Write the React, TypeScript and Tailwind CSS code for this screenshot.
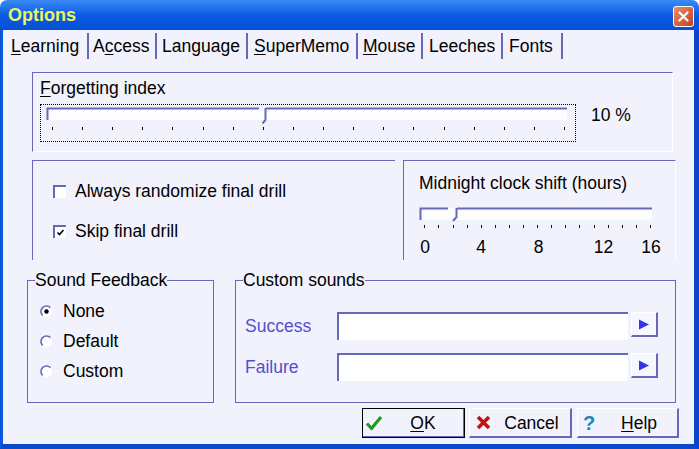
import React from 'react'

const tabs = [
  { label: 'Learning', u: 0, cls: 'w-[84px] pl-[8px]' },
  { label: 'Access', u: 1, cls: 'w-[66px] pl-[4px]' },
  { label: 'Language', u: -1, cls: 'w-[89px] pl-[5px]' },
  { label: 'SuperMemo', u: 0, cls: 'w-[108px] pl-[6px]' },
  { label: 'Mouse', u: 0, cls: 'w-[63px] pl-[5px]' },
  { label: 'Leeches', u: -1, cls: 'w-[78px] pl-[6px]' },
  { label: 'Fonts', u: -1, cls: 'w-[58px] pl-[6px]' },
]

const Mnemonic = ({ text, u }: { text: string; u: number }) =>
  u < 0 ? (
    <>{text}</>
  ) : (
    <>
      {text.slice(0, u)}
      <span className="underline underline-offset-2">{text[u]}</span>
      {text.slice(u + 1)}
    </>
  )

const CheckBox = ({ checked }: { checked?: boolean }) => (
  <span className="flex h-[13px] w-[13px] items-center justify-center border-t-2 border-l-2 border-t-[#6868b8] border-l-[#6868b8] bg-white">
    {checked && (
      <svg width="9" height="9" viewBox="0 0 9 9">
        <path d="M1.5 4.5 L3.5 6.5 L7.5 2" stroke="#000" strokeWidth="1.6" fill="none" />
      </svg>
    )}
  </span>
)

const Radio = ({ on }: { on?: boolean }) => (
  <svg width="13" height="13" viewBox="0 0 13 13">
    <circle cx="6.5" cy="6.5" r="5.5" fill="#fff" />
    <path d="M10.4 2.6 A5.5 5.5 0 0 0 2.6 10.4" stroke="#6868b8" strokeWidth="1.6" fill="none" />
    {on && <circle cx="6.5" cy="6.5" r="2.2" fill="#000" />}
  </svg>
)

const PlayButton = () => (
  <button
    type="button"
    className="ml-[3px] flex h-[25px] w-[27px] items-center justify-center border-t border-l border-t-white border-l-white border-r-2 border-b-2 border-r-[#6868b8] border-b-[#6868b8] bg-[#f7f7ff]"
  >
    <svg width="12" height="11" viewBox="0 0 12 11">
      <path d="M1 0.5 L11 5.5 L1 10.5 Z" fill="#3434e8" />
    </svg>
  </button>
)

export default function App() {
  const bigTicks = Array.from({ length: 18 }, (_, i) => 11 + i * 30.12)
  const hourTicks = Array.from({ length: 17 }, (_, i) => 5.3 + i * 14.1)
  const hourLabels = [
    { t: '0', x: 6 },
    { t: '4', x: 62 },
    { t: '8', x: 119.5 },
    { t: '12', x: 184.5 },
    { t: '16', x: 232 },
  ]

  return (
    <div className="flex h-[449px] w-[699px] flex-col overflow-hidden rounded-t-[7px] font-['Liberation_Sans',Arial,sans-serif] text-[17.5px] leading-[20px] text-black">
      {/* title bar */}
      <div className="flex h-[30px] items-center justify-between bg-linear-to-b from-[#3b8bf6] via-[#0a5ae4] to-[#0650d6] pl-[8px] pr-[5px]">
        <span className="text-[18px] font-bold text-[#eef55a]">Options</span>
        <button
          type="button"
          className="mt-[2px] flex h-[21px] w-[21px] items-center justify-center rounded-[3px] border border-white bg-linear-to-br from-[#ec8a66] to-[#c43e1c]"
        >
          <svg width="11" height="11" viewBox="0 0 11 11">
            <path d="M1.5 1.5 L9.5 9.5 M9.5 1.5 L1.5 9.5" stroke="#fff" strokeWidth="2.2" strokeLinecap="round" />
          </svg>
        </button>
      </div>

      <div className="flex flex-1 flex-col border-l-[3px] border-r-[5px] border-b-[5px] border-l-[#0b57e0] border-r-[#0a44c8] border-b-[#0a48cc] bg-[#f2f2fc]">
        {/* tabs */}
        <div className="flex h-[32px] items-center">
          {tabs.map((t) => (
            <React.Fragment key={t.label}>
              <span className={t.cls}>
                <Mnemonic text={t.label} u={t.u} />
              </span>
              <span className="h-[26px] w-[2px] bg-[#6868b8]" />
            </React.Fragment>
          ))}
        </div>

        {/* forgetting index */}
        <div className="ml-[29px] mt-[10px] h-[80px] w-[641px] border border-t-[#6868b8] border-l-[#6868b8] border-r-white border-b-white pl-[7px] pt-[5px]">
          <div>
            <Mnemonic text="Forgetting index" u={0} />
          </div>
          <div className="mt-[6px] flex items-start">
            <div className="h-[38px] w-[536px] border border-dotted border-black">
              <svg width="534" height="36" viewBox="0 0 534 36" className="block">
                <rect x="6" y="3" width="520" height="12" fill="#fdfdff" />
                <path d="M6.5 15 V3.5 H218" stroke="#6868b8" strokeWidth="2" fill="none" />
                <path d="M224.5 3 V15 L221.5 18.5" stroke="#6868b8" strokeWidth="2" fill="none" />
                <path d="M225 3.5 H526" stroke="#6868b8" strokeWidth="2" fill="none" />
                {bigTicks.map((x) => (
                  <rect key={x} x={Math.round(x)} y="22" width="1" height="3" fill="#000" />
                ))}
              </svg>
            </div>
            <span className="ml-[15px] mt-[1px]">10 %</span>
          </div>
        </div>

        {/* drill options + midnight shift */}
        <div className="ml-[29px] mt-[8px] flex h-[100px]">
          <div className="flex w-[363px] flex-col gap-[20px] border-t border-l border-[#6868b8] pl-[20px] pt-[20px]">
            <div className="flex h-[20px] items-center">
              <CheckBox />
              <span className="ml-[9px]">Always randomize final drill</span>
            </div>
            <div className="flex h-[20px] items-center">
              <CheckBox checked />
              <span className="ml-[9px]">Skip final drill</span>
            </div>
          </div>
          <div className="ml-[8px] w-[273px] border-t border-l border-r border-t-[#6868b8] border-l-[#6868b8] border-r-white pl-[15px] pt-[12px]">
            <div>Midnight clock shift (hours)</div>
            <svg width="250" height="58" viewBox="0 0 250 58" className="mt-[7px] block">
              <rect x="1" y="8" width="232" height="12" fill="#fdfdff" />
              <path d="M1.5 20 V8.5 H29" stroke="#6868b8" strokeWidth="2" fill="none" />
              <path d="M37.5 8 V17 L34 21" stroke="#6868b8" strokeWidth="2" fill="none" />
              <path d="M38 8.5 H233" stroke="#6868b8" strokeWidth="2" fill="none" />
              {hourTicks.map((x) => (
                <rect key={x} x={Math.round(x)} y="25" width="1" height="3" fill="#000" />
              ))}
              {hourLabels.map((l) => (
                <text
                  key={l.t}
                  x={l.x}
                  y="53"
                  textAnchor="middle"
                  fontSize="17.5"
                  fontFamily="'Liberation Sans', Arial, sans-serif"
                  fill="#000"
                >
                  {l.t}
                </text>
              ))}
            </svg>
          </div>
        </div>

        {/* sounds */}
        <div className="ml-[24px] mt-[10px] flex items-start">
          <fieldset className="h-[133px] w-[187px] border border-[#6868b8]">
            <legend className="ml-[7px]">Sound Feedback</legend>
            <div className="flex flex-col pl-[12px] pt-[6px]">
              {['None', 'Default', 'Custom'].map((s, i) => (
                <div key={s} className="flex h-[30px] items-center">
                  <Radio on={i === 0} />
                  <span className="ml-[10px]">{s}</span>
                </div>
              ))}
            </div>
          </fieldset>
          <fieldset className="ml-[21px] h-[133px] w-[441px] border border-[#6868b8]">
            <legend className="ml-[7px]">Custom sounds</legend>
            <div className="flex flex-col gap-[13px] pl-[9px] pt-[22px]">
              {['Success', 'Failure'].map((s) => (
                <div key={s} className="flex h-[28px] items-start">
                  <span className="w-[92px] leading-[28px] text-[#5050d0]">{s}</span>
                  <div className="h-[28px] w-[291px] border-t-2 border-l-2 border-t-[#6868b8] border-l-[#6868b8] bg-white" />
                  <PlayButton />
                </div>
              ))}
            </div>
          </fieldset>
        </div>

        {/* buttons */}
        <div className="mt-[5px] flex justify-end gap-[4px] pr-[15px]">
          <button type="button" className="h-[30px] w-[103px] border border-black">
            <span className="flex h-full w-full items-center border-r border-b border-r-[#6868b8] border-b-[#6868b8] pl-[2px]">
              <svg width="18" height="16" viewBox="0 0 18 16">
                <path d="M2 8.5 L6.5 13.5 L16 2" stroke="#1f9a22" strokeWidth="3.2" fill="none" strokeLinejoin="round" />
              </svg>
              <span className="flex-1 text-center">
                <Mnemonic text="OK" u={0} />
              </span>
            </span>
          </button>
          <button
            type="button"
            className="flex h-[30px] w-[103px] items-center border-t border-l border-t-white border-l-white border-r-2 border-b-2 border-r-[#6868b8] border-b-[#6868b8] pl-[6px]"
          >
            <svg width="15" height="15" viewBox="0 0 15 15">
              <path d="M2 2 L13 13 M13 2 L2 13" stroke="#c41212" strokeWidth="3.6" />
            </svg>
            <span className="flex-1 pl-[2px] text-center">Cancel</span>
          </button>
          <button
            type="button"
            className="ml-[1px] flex h-[30px] w-[102px] items-center border-t border-l border-t-white border-l-white border-r-2 border-b-2 border-r-[#6868b8] border-b-[#6868b8] pl-[5px]"
          >
            <span className="text-[20px] font-bold text-[#1a8ab4]">?</span>
            <span className="flex-1 pl-[6px] text-center">
              <Mnemonic text="Help" u={0} />
            </span>
          </button>
        </div>
      </div>
    </div>
  )
}
